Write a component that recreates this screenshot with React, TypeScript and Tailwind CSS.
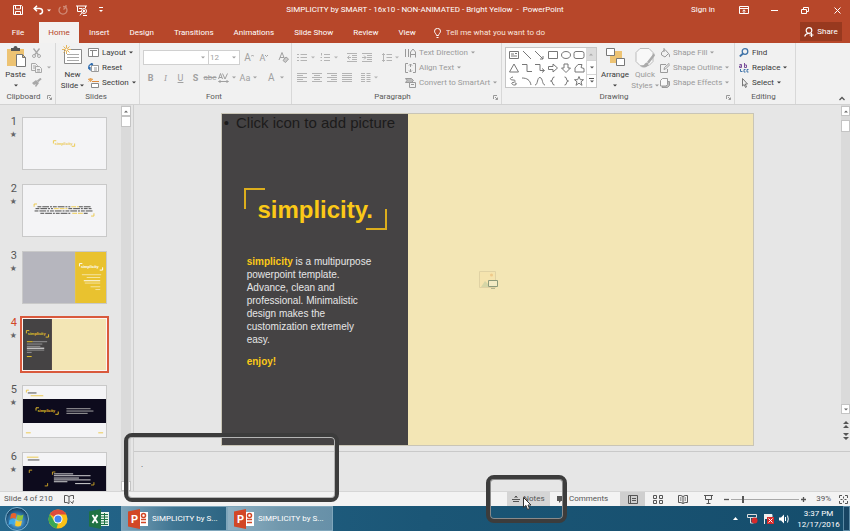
import type { ReactNode } from 'react';

const ui = "font-['Roboto','Open_Sans',sans-serif]";
const arial = "font-['Liberation_Sans',Arial,sans-serif]";

type IconProps = { w: number; h: number; children: ReactNode; className?: string };

function Ico({ w, h, children, className = '' }: IconProps) {
  return (
    <svg
      width={w}
      height={h}
      viewBox={`0 0 ${w} ${h}`}
      fill="none"
      stroke="currentColor"
      strokeWidth="1"
      className={`shrink-0 ${className}`}
      aria-hidden="true"
    >
      {children}
    </svg>
  );
}

function Caret({ className = '' }: { className?: string }) {
  return (
    <svg width="4" height="3" viewBox="0 0 4 3" fill="currentColor" className={`shrink-0 ${className}`} aria-hidden="true">
      <path d="M0 0.5h4L2 2.5z" />
    </svg>
  );
}

function Divider() {
  return <span className="h-[15px] w-px shrink-0 bg-[#d5d5d5]" />;
}

function Tool({ label, children, className = '' }: { label: string; children: ReactNode; className?: string }) {
  return (
    <button type="button" aria-label={label} className={`flex h-[15px] items-center justify-center gap-[3px] ${className}`}>
      {children}
    </button>
  );
}

function RowTool({ icon, text, caret, muted }: { icon: ReactNode; text: string; caret?: boolean; muted?: boolean }) {
  return (
    <button
      type="button"
      className={`flex h-[15px] items-center gap-[3px] whitespace-nowrap ${muted ? 'text-[#9a9a9a]' : 'text-[#3a3a3a]'}`}
    >
      {icon}
      <span>{text}</span>
      {caret && <Caret />}
    </button>
  );
}

function Group({ title, width, launcher, children }: { title: string; width: string; launcher?: boolean; children: ReactNode }) {
  return (
    <section aria-label={title} className={`flex shrink-0 flex-col border-r border-[#d8d8d8] ${width}`}>
      <div className="flex h-[47px] pt-[2px]">{children}</div>
      <div className="flex h-[14px] items-center pr-[3px] text-[#5a5a5a]">
        <span className="flex-1 text-center">{title}</span>
        {launcher && (
          <Ico w={5} h={5} className="text-[#999]">
            <path d="M0.5 4V0.5H4M2 2l2.500 2.500M4.500 2.500v2h-2" />
          </Ico>
        )}
      </div>
    </section>
  );
}

function TitleBar() {
  return (
    <header className="grid h-[22px] grid-cols-[1fr_auto_1fr] items-start text-white">
      <div className="flex h-5 items-center pl-[13px]">
        <button type="button" aria-label="Save">
          <Ico w={10} h={10}>
            <path d="M0.500 0.500h8l1 1v8h-9zM2.500 0.500v3.500h5V0.500M2.500 9.500V6.500h5v3" />
          </Ico>
        </button>
        <button type="button" aria-label="Undo" className="ml-[10px] flex items-center gap-[3px]">
          <Ico w={11} h={10}>
            <path strokeWidth="1.500" d="M4 0.800L1.200 3.500L4 6.200M1.500 3.500H6.500C10.500 3.800 10.500 8.500 6.500 9" />
          </Ico>
          <Caret />
        </button>
        <button type="button" aria-label="Redo" className="ml-[7px] text-[#d08a76]">
          <Ico w={10} h={10}>
            <path strokeWidth="1.300" d="M2.500 2A4 4 0 1 0 7.500 2M5.500 4.500L8 2L8 0M8 2L5 1.500" />
          </Ico>
        </button>
        <button type="button" aria-label="Start From Beginning" className="ml-[8px]">
          <Ico w={12} h={11}>
            <path d="M0 1h11M1.500 1v5.500h4M9.500 1v2M4 10.500l2-3M3 3.500h3" />
            <circle cx="8" cy="6" r="2.500" />
            <path fill="currentColor" d="M7.500 5v2l1.500-1zM7 10.500h4" />
          </Ico>
        </button>
        <button type="button" aria-label="Customize Quick Access Toolbar" className="ml-[11px]">
          <Ico w={4} h={6}>
            <path d="M0 0.500h4" />
            <path stroke="none" fill="currentColor" d="M0 3h4L2 5z" />
          </Ico>
        </button>
      </div>
      <h1 className="h-5 whitespace-pre leading-5">SIMPLICITY by SMART - 16x10 - NON-ANIMATED - Bright Yellow  -  PowerPoint</h1>
      <div className="flex h-5 items-center justify-end pr-[9px]">
        <button type="button">Sign in</button>
        <button type="button" aria-label="Ribbon Display Options" className="ml-6">
          <Ico w={10} h={8}>
            <path d="M0.500 0.500h9v7h-9zM0.500 2.500h9M5 7V4M3.500 5.200L5 3.800l1.500 1.400" />
          </Ico>
        </button>
        <button type="button" aria-label="Minimize" className="ml-[22px]">
          <Ico w={7} h={7}>
            <path d="M0 3.500h7" />
          </Ico>
        </button>
        <button type="button" aria-label="Restore Down" className="ml-[23px]">
          <Ico w={8} h={7}>
            <path d="M0.500 2.500h5v4h-5zM2.500 2V0.500h5v4H6" />
          </Ico>
        </button>
        <button type="button" aria-label="Close" className="ml-[25px]">
          <Ico w={7} h={7}>
            <path d="M0.500 0.500l6 6M6.500 0.500l-6 6" />
          </Ico>
        </button>
      </div>
    </header>
  );
}

const tabs = ['Insert', 'Design', 'Transitions', 'Animations', 'Slide Show', 'Review', 'View'];

function TabBar() {
  return (
    <nav className="flex h-[21px] items-stretch text-white">
      <button type="button" className="w-[39px] pr-[3px]">File</button>
      <button type="button" className="w-10 bg-[#f3f2f1] text-[#b7472a]">Home</button>
      {tabs.map((t) => (
        <button key={t} type="button" className="whitespace-nowrap px-[10px]">
          {t}
        </button>
      ))}
      <label className="ml-2 flex min-w-0 flex-1 items-center gap-[5px]">
        <Ico w={7} h={10}>
          <path d="M2.500 7.500C2.500 6 0.500 5 0.500 3.200a3 2.800 0 0 1 6 0C6.500 5 4.500 6 4.500 7.500zM2.500 9.500h2" />
        </Ico>
        <input
          type="text"
          aria-label="Tell me what you want to do"
          placeholder="Tell me what you want to do"
          className="min-w-0 flex-1 bg-transparent outline-none placeholder:text-[#f7e3dd]"
        />
      </label>
      <button type="button" className="mr-2 flex h-[19px] w-[42px] items-center justify-center gap-[3px] bg-[#98391f]">
        <Ico w={10} h={10}>
          <circle cx="5" cy="3.500" r="2.800" strokeWidth="1.200" />
          <path strokeWidth="1.200" d="M0.800 9.500C1 7.500 2.500 6.500 4.500 6.300M7.500 6v4M5.500 8h4" />
        </Ico>
        Share
      </button>
    </nav>
  );
}

function ClipboardGroup() {
  return (
    <Group title="Clipboard" width="w-[56px]" launcher>
      <button type="button" className="ml-[5px] flex w-[21px] flex-col items-center text-[#3a3a3a]">
        <Ico w={20} h={23}>
          <path stroke="none" fill="#edc373" d="M1 4h17v17H1z" />
          <path stroke="none" fill="#555" d="M5 3h2.500a2 2 0 0 1 4 0H14v3H5z" />
          <path fill="#fff" stroke="#777" d="M10.500 9.500h6l3 3v9h-9zM16.500 9.500v3h3" />
        </Ico>
        <span className="mt-[2px] leading-[10px]">Paste</span>
        <Caret className="mt-[4px]" />
      </button>
      <div className="ml-[5px] flex flex-col items-start text-[#a8a8a8]">
        <Tool label="Cut" className="w-[10px]">
          <Ico w={9} h={10}>
            <path strokeWidth="1.300" d="M1.500 0.500l5 6.500M7.500 0.500l-5 6.500" />
            <circle cx="2" cy="8" r="1.500" />
            <circle cx="7" cy="8" r="1.500" />
          </Ico>
        </Tool>
        <Tool label="Copy">
          <Ico w={11} h={10}>
            <path d="M0.500 0.500h4l2 2v5h-6zM2 3h3M2 5h3" />
            <path fill="#f1f1f1" d="M4.500 3.500h4l2 2v4h-6zM6 6.500h3M6 8h3" />
          </Ico>
          <Caret className="ml-[2px]" />
        </Tool>
        <Tool label="Format Painter" className="w-[12px]">
          <Ico w={10} h={9}>
            <path stroke="none" fill="currentColor" d="M0 5l4-3 3 3-3 4-1-1 1-2-2 1z" />
            <path strokeWidth="2" d="M5.500 3.500L9 0.500" />
          </Ico>
        </Tool>
      </div>
    </Group>
  );
}

function SlidesGroup() {
  return (
    <Group title="Slides" width="w-[84px]">
      <button type="button" className="ml-[4px] flex w-[25px] flex-col items-center text-[#3a3a3a]">
        <Ico w={21} h={20}>
          <path fill="#fff" stroke="#8a8a8a" d="M2.500 4.500h17v14h-17z" />
          <path stroke="#aaa" d="M5 9.500h12M5 12.500h12M5 15.500h12" />
          <path stroke="#e5b55c" d="M4.500 0v9M0 4.500h9M1.500 1.500l6 6M7.500 1.500l-6 6" />
          <circle cx="4.500" cy="4.500" r="1.500" fill="#fff" stroke="#e5b55c" />
        </Ico>
        <span className="mt-[5px] leading-[10px]">New</span>
        <span className="flex items-center gap-[2px] leading-[11px]">
          Slide <Caret />
        </span>
      </button>
      <div className="ml-[3px] flex flex-col items-start">
        <RowTool
          text="Layout"
          caret
          icon={
            <Ico w={11} h={9}>
              <path fill="#fff" stroke="#888" d="M0.500 0.500h10v8h-10zM2 2.500h7M4.500 2.500v6" />
            </Ico>
          }
        />
        <RowTool
          text="Reset"
          icon={
            <Ico w={11} h={10}>
              <path fill="#fff" stroke="#999" d="M3.500 2.500h7v6h-7zM6 5h3M6 7h3" />
              <path stroke="#2f6db0" strokeWidth="1.300" d="M5 1.500H2.500C0.500 2.500 0.500 4 1.500 5.500M0 4.500l2 2V4M3 0l2 1.500" />
            </Ico>
          }
        />
        <RowTool
          text="Section"
          caret
          icon={
            <Ico w={11} h={10}>
              <path stroke="#e5a55c" d="M0 1.500h5M2.500 0v4M0.500 0l4 3.500M4.500 0l-4 3.500" />
              <path stroke="#e08a3a" d="M4 3.500h7" />
              <path fill="#fff" stroke="#888" d="M3.500 5.500h7v4h-7z" />
            </Ico>
          }
        />
      </div>
    </Group>
  );
}

function FontGroup() {
  return (
    <Group title="Font" width="w-[152px]">
      <div className="flex flex-1 flex-col pl-[3px] text-[#a0a0a0]">
        <div className="mt-[5px] flex h-[15px] items-center">
          <label className="flex h-[15px] w-[66px] items-center border border-[#d0d0d0] bg-white pr-[3px]">
            <select aria-label="Font" className="min-w-0 flex-1 appearance-none bg-transparent outline-none">
              <option></option>
            </select>
            <Caret />
          </label>
          <label className="flex h-[15px] w-[31px] items-center border border-l-0 border-[#d0d0d0] bg-white pl-px pr-[3px]">
            <select aria-label="Font Size" className="min-w-0 flex-1 appearance-none bg-transparent outline-none">
              <option>12</option>
            </select>
            <Caret />
          </label>
          <Tool label="Increase Font Size" className="ml-[4px] w-[10px] text-[10px]">
            A<Ico w={3} h={8} className="-ml-[3px]"><path d="M0 2.500l1.500-1.500l1.500 1.500" /></Ico>
          </Tool>
          <Tool label="Decrease Font Size" className="ml-[5px] w-[10px] text-[9px]">
            A<Ico w={3} h={8} className="-ml-[3px]"><path d="M0 1l1.500 1.500L3 1" /></Ico>
          </Tool>
          <span className="ml-[4px]"><Divider /></span>
          <Tool label="Clear All Formatting" className="ml-[5px]">
            <Ico w={11} h={11}>
              <path d="M1 8L4 0.500L7 8M2 5.500h4" />
              <path fill="#ccc" d="M5 8.500l3-3.500l2.500 2l-3 3.500z" />
            </Ico>
          </Tool>
        </div>
        <div className="mt-[5px] flex h-[15px] items-center text-[9px]">
          <Tool label="Bold" className="w-[15px] font-bold">B</Tool>
          <Tool label="Italic" className="w-[15px] font-serif italic">I</Tool>
          <Tool label="Underline" className="w-[15px] underline">U</Tool>
          <Tool label="Text Shadow" className="w-[15px] font-bold">S</Tool>
          <Tool label="Strikethrough" className="w-[14px] text-[8px] line-through">abc</Tool>
          <Tool label="Character Spacing" className="w-[19px] text-[8px]">
            <Ico w={11} h={10}>
              <path d="M0.500 6L2.500 0.500L4.500 6M1 4.500h3M4.500 0.500L7 6L9.500 0.500M1 8.500h9M2.500 7.500l-2 1l2 1M8.500 7.500l2 1l-2 1" />
            </Ico>
            <Caret />
          </Tool>
          <Tool label="Change Case" className="ml-[2px] w-[21px]">
            Aa <Caret />
          </Tool>
          <span className="ml-[3px]"><Divider /></span>
          <Tool label="Font Color" className="ml-[6px] text-[10px]">
            A <Caret className="ml-[2px]" />
          </Tool>
        </div>
      </div>
    </Group>
  );
}

function Lines({ d }: { d: string }) {
  return (
    <Ico w={10} h={9}>
      <path d={d} />
    </Ico>
  );
}

function ParagraphGroup() {
  return (
    <Group title="Paragraph" width="w-[210px]" launcher>
      <div className="flex w-[113px] flex-col pl-[5px] text-[#b4b4b4]">
        <div className="mt-[5px] flex h-[15px] items-center">
          <Tool label="Bullets">
            <Lines d="M0 1.500h2M0 4.500h2M0 7.500h2M3.500 1.500H10M3.500 4.500H10M3.500 7.500H10" />
            <Caret className="ml-px" />
          </Tool>
          <Tool label="Numbering" className="ml-[5px]">
            <Lines d="M1.500 0v2.500M0.500 4.500h1.500M0.500 7.500h1.500M4 1.500H10M4 4.500H10M4 7.500H10" />
            <Caret className="ml-px" />
          </Tool>
          <span className="ml-[4px]"><Divider /></span>
          <Tool label="Decrease List Level" className="ml-[5px]">
            <Lines d="M0 0.500h10M5 2.500h5M5 4.500h5M5 6.500h5M0 8.500h10M4 4.500H0.500M2.500 2.500l-2 2l2 2" />
          </Tool>
          <Tool label="Increase List Level" className="ml-[5px]">
            <Lines d="M0 0.500h10M5 2.500h5M5 4.500h5M5 6.500h5M0 8.500h10M0 4.500h4M2 2.500l2 2l-2 2" />
          </Tool>
          <span className="ml-[5px]"><Divider /></span>
          <Tool label="Line Spacing" className="ml-[5px]">
            <Lines d="M1.500 0.500v8M0 2l1.500-1.500L3 2M0 7l1.500 1.500L3 7M4.500 1.500H10M4.500 4.500H10M4.500 7.500H10" />
            <Caret />
          </Tool>
        </div>
        <div className="mt-[5px] flex h-[15px] items-center">
          <Tool label="Align Left">
            <Lines d="M0 0.500h10M0 2.500h6M0 4.500h10M0 6.500h6M0 8.500h10" />
          </Tool>
          <Tool label="Center" className="ml-[5px]">
            <Lines d="M0 0.500h10M2 2.500h6M0 4.500h10M2 6.500h6M0 8.500h10" />
          </Tool>
          <Tool label="Align Right" className="ml-[5px]">
            <Lines d="M0 0.500h10M4 2.500h6M0 4.500h10M4 6.500h6M0 8.500h10" />
          </Tool>
          <Tool label="Justify" className="ml-[5px]">
            <Lines d="M0 0.500h10M0 2.500h10M0 4.500h10M0 6.500h10M0 8.500h10" />
          </Tool>
          <span className="ml-[4px]"><Divider /></span>
          <Tool label="Columns" className="ml-[5px]">
            <Lines d="M0 0.500h4M0 2.500h4M0 4.500h4M0 6.500h4M0 8.500h4M5.500 0.500h4M5.500 2.500h4M5.500 4.500h4M5.500 6.500h4M5.500 8.500h4" />
            <Caret />
          </Tool>
        </div>
      </div>
      <div className="flex flex-col items-start">
        <RowTool
          muted
          text="Text Direction"
          caret
          icon={<Ico w={11} h={10}><path d="M0.500 1v8M3.500 1v8M5.500 9.500V4L8 1l2.500 3v5.500M5.500 6.500h5" /></Ico>}
        />
        <RowTool
          muted
          text="Align Text"
          caret
          icon={<Ico w={11} h={10}><path d="M3 0.500H0.500v9H3M8 0.500h2.500v9H8M5.500 1v3M4 2.500L5.500 1L7 2.500M5.500 6v3M4 7.500L5.500 9L7 7.500" /></Ico>}
        />
        <RowTool
          muted
          text="Convert to SmartArt"
          caret
          icon={<Ico w={11} h={10}><path fill="#bbb" d="M0.500 0.500h6l2 2l-2 2h-6l1.500-2z" /><path fill="#f1f1f1" d="M4.500 4.500h6v5h-6zM6 6.500h3" /></Ico>}
        />
      </div>
    </Group>
  );
}

const shapes = [
  'M1.500 1.500h9v7h-9zM3 4h3M3 6h6M7 3.500h2',
  'M2 1l8 8',
  'M1 1l8 8M9 6v3H6',
  'M1.500 1.500h9v7h-9z',
  'M6 1.500c6 0 6 7 0 7s-6-7 0-7z',
  'M3 1.500h6q2 0 2 2v3q0 2-2 2H3q-2 0-2-2v-3q0-2 2-2z',
  'M6 1l4.500 8h-9z',
  'M1 1.500h5v7h5',
  'M1 1.500h5v6h4M8 5.500l2.500 2L8 9.500',
  'M1.500 3.500H6v-2.500L10.500 5L6 9V6.500H1.500z',
  'M4 1h4v4h2.500L6 9.500L1.500 5H4z',
  'M2 9V5l3-3.500h4L8 4.500l3 1V9z',
  'M5 1C1 2 2 4 5 4s3 2 0 2.500s0 3 2 2.500s2-2 0-2',
  'M1 2c5 0 8 2 9 7',
  'M1 9C4 9 3 1 6 1.500S8 9 11 9',
  'M7.500 1q-2 0-2 2t-2 2q2 0 2 2t2 2',
  'M4.500 1q2 0 2 2t2 2q-2 0-2 2t-2 2',
  'M6 0.500l1.300 3.200h3.200L8 5.800l1 3.500L6 7.200L3 9.300l1-3.500L1.500 3.700h3.200z',
];

function DrawingGroup() {
  return (
    <Group title="Drawing" width="w-[233px]" launcher>
      <div className="ml-[3px] mt-[2px] flex h-[41px] shrink-0 border border-[#c6c6c6] bg-white">
        <div className="grid grid-cols-6 content-around pl-px text-[#777]">
          {shapes.map((d) => (
            <button key={d} type="button" aria-label="Shape" className="flex h-[13px] w-[13px] items-center justify-center">
              <Ico w={12} h={10}>
                <path d={d} />
              </Ico>
            </button>
          ))}
        </div>
        <div className="ml-px flex w-[10px] flex-col text-[#555]">
          <button type="button" aria-label="Scroll shapes up" className="flex flex-1 items-center justify-center bg-[#dcdcdc]">
            <Caret className="rotate-180 text-[#aaa]" />
          </button>
          <button type="button" aria-label="Scroll shapes down" className="flex flex-1 items-center justify-center border-y border-l border-[#d5d5d5]">
            <Caret />
          </button>
          <button type="button" aria-label="More shapes" className="flex flex-1 flex-col items-center justify-center gap-px border-l border-[#d5d5d5]">
            <span className="h-px w-[5px] bg-[#555]" />
            <Caret />
          </button>
        </div>
      </div>
      <button type="button" className="ml-[3px] flex w-[30px] shrink-0 flex-col items-center text-[#3a3a3a]">
        <Ico w={19} h={20} className="mt-[2px]">
          <path stroke="none" fill="#edc373" d="M4 4h12v12H4z" />
          <path fill="#fff" stroke="#777" d="M0.500 1.500h8v7h-8zM10.500 11.500h8v7h-8z" />
        </Ico>
        <span className="mt-[3px] leading-[10px]">Arrange</span>
        <Caret className="mt-[4px]" />
      </button>
      <button type="button" className="flex w-[30px] shrink-0 flex-col items-center text-[#9a9a9a]">
        <Ico w={20} h={21} className="mt-[2px]">
          <path stroke="#bbb" fill="#f8f8f8" d="M5 1.500h9l4 4v9l-4 4H5l-4-4v-9z" />
          <path stroke="none" fill="#aaa" d="M19 6l-7 9l2 1.500l6-8zM12 15.500c-3 0-2 4-7 4c4 2 9 1 8.500-3z" />
        </Ico>
        <span className="mt-[2px] leading-[10px]">Quick</span>
        <span className="flex items-center gap-[2px] leading-[11px]">
          Styles <Caret />
        </span>
      </button>
      <div className="flex flex-col items-start">
        <RowTool
          muted
          text="Shape Fill"
          caret
          icon={<Ico w={10} h={10}><path d="M1.500 4.500L5 1.500l3.500 4L5 9L1.500 7zM4 0v4M8.500 5.500c2 2 1 3.500 0.500 3.500" /></Ico>}
        />
        <RowTool
          muted
          text="Shape Outline"
          caret
          icon={<Ico w={10} h={10}><path d="M6 1.500H0.500v8h7V6M4 6.500l0.500-2L9 0.500l1 1L5.500 6z" /></Ico>}
        />
        <RowTool
          muted
          text="Shape Effects"
          caret
          icon={<Ico w={10} h={10}><path fill="#bbb" d="M4 3.500h5.500v4l-2 2H2z" /><path fill="#f8f8f8" d="M2.500 0.500h5v6L6 8H0.500V2.500z" /></Ico>}
        />
      </div>
    </Group>
  );
}

function EditingGroup() {
  return (
    <Group title="Editing" width="w-[61px]">
      <div className="ml-[4px] flex flex-col items-start">
        <RowTool
          text="Find"
          icon={
            <Ico w={10} h={9}>
              <circle cx="6" cy="3.500" r="2.800" stroke="#3f73a8" strokeWidth="1.300" />
              <path stroke="#3f73a8" strokeWidth="1.800" d="M4 5.500L0.800 8.500" />
            </Ico>
          }
        />
        <RowTool
          text="Replace"
          caret
          icon={
            <Ico w={10} h={10}>
              <path stroke="#7a4f9a" d="M0.500 1.500h2V4.500h-2v-1.500h2M5.500 0v4.500h2v-2.500h-2" />
              <path stroke="#3f73a8" d="M1.500 6v2.500h2M6.500 6.500h-1.500v2.500h1.500M9.500 6.500H8v2.500h1.500" />
            </Ico>
          }
        />
        <RowTool
          text="Select"
          caret
          icon={<Ico w={10} h={10}><path stroke="#777" d="M3.500 0.500v7.500l1.700-1.500l1.300 3l1-0.500l-1.200-3H8.500z" /></Ico>}
        />
      </div>
    </Group>
  );
}

function Ribbon() {
  return (
    <div className="flex h-[62px] shrink-0 border-b border-[#d2d2d2] bg-[#f1f1f1]">
      <ClipboardGroup />
      <SlidesGroup />
      <FontGroup />
      <ParagraphGroup />
      <DrawingGroup />
      <EditingGroup />
      <div className="flex flex-1 items-end justify-end pb-[3px] pr-[5px] text-[#555]">
        <button type="button" aria-label="Collapse the Ribbon">
          <Ico w={6} h={5}>
            <path strokeWidth="1.300" d="M0.500 4L3 1.500L5.500 4" />
          </Ico>
        </button>
      </div>
    </div>
  );
}

function Brackets({ x, y, w, h, s, color }: { x: number; y: number; w: number; h: number; s: number; color: string }) {
  return <path stroke={color} d={`M${x} ${y + s}V${y}H${x + s}M${x + w} ${y + h - s}V${y + h}H${x + w - s}`} />;
}

function ThumbText({ x, y, size = 4, color }: { x: number; y: number; size?: number; color: string }) {
  return (
    <text x={x} y={y} fontSize={size} fontWeight="bold" fill={color} stroke="none" className={arial}>
      simplicity
    </text>
  );
}

const miniatures: ReactNode[] = [
  <>
    <path stroke="none" fill="#f4f4f6" d="M0 0h86v55H0z" />
    <Brackets x={31.500} y={24.500} w={22} h={6} s={3} color="#ecc94b" />
    <ThumbText x={33} y={29} color="#ecc94b" />
  </>,
  <>
    <path stroke="none" fill="#f4f4f6" d="M0 0h86v55H0z" />
    <Brackets x={11.500} y={20.500} w={62} h={13} s={3} color="#ecc94b" />
    <path stroke="#444" strokeDasharray="4 1 7 1 2 1" d="M15 23.500h34M58 23.500h12M13 25.500h18M47 25.500h24M12 28h61M18 30.500h32M63 30.500h5" />
    <path stroke="#ecc94b" strokeDasharray="5 1" d="M50 23.500h8M32 25.500h14M51 30.500h11" />
  </>,
  <>
    <path stroke="none" fill="#b6b6be" d="M0 0h54v55H0z" />
    <path stroke="none" fill="#e9c22f" d="M54 0h32v55H54z" />
    <Brackets x={58.500} y={12.500} w={24} h={7} s={3} color="#fff" />
    <ThumbText x={60} y={17} color="#fff" />
    <path stroke="#f6e6a4" d="M61 24.500h20M66 27.500h14M64 33.500h16M70 37.500h10M75 40.500h5" />
    <path stroke="#fff" d="M63 31h17" />
  </>,
  <>
    <path stroke="none" fill="#454344" d="M0 0h30v55H0z" />
    <path stroke="none" fill="#f3e6b5" d="M30 0h56v55H30z" />
    <Brackets x={3.500} y={12.500} w={23} h={7} s={3} color="#e9c22f" />
    <ThumbText x={5} y={17.500} color="#ecc524" />
    <path stroke="#999" d="M10 24.500h15M4 27h16M4 29.500h14M4 33.500h18M4 36h5" />
    <path stroke="#fff" d="M4 31.500h18" />
    <path stroke="#ecc524" d="M4 24.500h6M4 40.500h5" />
  </>,
  <>
    <path stroke="none" fill="#f4f4f6" d="M0 0h86v55H0z" />
    <path stroke="none" fill="#0d0b1d" d="M0 14h86v26H0z" />
    <path stroke="#444" d="M5 7.500h9" />
    <path stroke="#ecc94b" d="M3.500 7V4.500H6M8 10.500h13M3 50.500h5M78 50.500h5" />
    <Brackets x={13.500} y={23.500} w={23} h={7} s={3} color="#e9c22f" />
    <ThumbText x={15} y={28.500} color="#ecc524" />
    <path stroke="#aaa" d="M45 24.500h25M45 27h28M45 29.500h22" />
  </>,
  <>
    <path stroke="none" fill="#f4f4f6" d="M0 0h86v55H0z" />
    <path stroke="none" fill="#0d0b1d" d="M0 14h86v41H0z" />
    <path stroke="#444" d="M5 7.500h12" />
    <path stroke="#ecc94b" d="M4 4.500h12" />
    <Brackets x={6.500} y={18.500} w={19} h={17} s={3} color="#c9a227" />
    <Brackets x={30.500} y={20.500} w={43} h={14} s={3} color="#c9a227" />
    <path stroke="#ddd" d="M32 22.500h20M32 24.500h38M32 27h26M32 29h38M32 31h14M54 33h16" />
  </>,
];

function ThumbnailPane() {
  return (
    <aside aria-label="Slides" className="w-[121px] shrink-0 overflow-hidden pt-[10px]">
      <ol className="flex flex-col gap-[10px]">
        {miniatures.map((m, i) => {
          const active = i === 3;
          return (
            <li key={i} className="flex shrink-0">
              <div className={`flex w-5 shrink-0 flex-col items-end gap-[3px] pr-[3px] text-[11px] leading-[13px] ${active ? 'text-[#d24726]' : 'text-[#555]'}`}>
                <span>{i + 1}</span>
                <span className="font-['DejaVu_Sans',sans-serif] text-[8px] leading-[8px] text-[#666]">★</span>
              </div>
              <button
                type="button"
                aria-label={`Slide ${i + 1}`}
                className={`h-[57px] border p-px ${active ? 'border-[#d9593c] bg-[#d9593c]' : 'border-transparent'}`}
              >
                <svg
                  width="83"
                  height="51"
                  viewBox="0 0 86 55"
                  preserveAspectRatio="none"
                  fill="none"
                  className={`box-content border ${active ? 'border-[#fdf5f2]' : 'border-[#c9c9c9]'}`}
                  aria-hidden="true"
                >
                  {m}
                </svg>
              </button>
            </li>
          );
        })}
      </ol>
    </aside>
  );
}

function ScrollButton({ label, down }: { label: string; down?: boolean }) {
  return (
    <button type="button" aria-label={label} className="flex h-[10px] items-center justify-center border border-[#c4c4c4] bg-white text-[#666]">
      <Caret className={down ? '' : 'rotate-180'} />
    </button>
  );
}

function Slide() {
  return (
    <article className={`relative flex aspect-[532/332] h-full border border-[#c9c5b6] bg-[#f3e6b5] ${arial}`}>
      <div className="flex w-[35%] flex-col bg-[#454344]">
        <p className="flex gap-[7px] whitespace-nowrap pl-[2px] text-[15px] leading-[18px] text-[#1c1b1b]">
          <span>•</span>
          <span>Click icon to add picture</span>
        </p>
        <div className="relative ml-[22px] mt-[56px] h-[42px] w-[143px] text-center">
          <span className="absolute left-0 top-0 h-[21px] w-[21px] border-l-2 border-t-2 border-[#dcae1d]" />
          <h2 className="text-[24px] font-bold leading-[44px] text-[#fbc917]">simplicity.</h2>
          <span className="absolute bottom-0 right-0 h-[21px] w-[21px] border-b-2 border-r-2 border-[#dcae1d]" />
        </div>
        <div className="ml-[25px] mt-[25px] w-[130px] text-[10px] leading-[13px] text-[#e6e6e6]">
          <p>
            <strong className="text-[#fbc917]">simplicity</strong> is a multipurpose powerpoint template.
            <br />
            Advance, clean and
            <br />
            professional. Minimalistic design makes the customization extremely easy.
          </p>
          <p className="mt-[9px] font-bold text-[#fbc917]">enjoy!</p>
        </div>
      </div>
      <button type="button" aria-label="Insert picture" className="absolute left-1/2 top-1/2 -translate-x-1/2 -translate-y-1/2">
        <Ico w={20} h={20}>
          <path fill="#f5e4ae" stroke="#e0d2a4" d="M1.500 1.500h16v16h-16z" />
          <circle cx="13.500" cy="5" r="1.500" stroke="none" fill="#efc98a" />
          <path stroke="none" fill="#d5d6a6" d="M3 17l4-6l3 3v3z" />
          <path fill="#f3ebc4" stroke="#8d9a7a" d="M10.500 10.500h9v6h-9z" />
          <path stroke="#b5b58e" d="M13 18.500h4" />
        </Ico>
      </button>
    </article>
  );
}

function NotesPane() {
  return (
    <section aria-label="Notes" className="relative h-10 shrink-0 border-t border-[#c9c9c9]">
      <p className="pl-[7px] pt-[8px] text-[#444]">.</p>
      <div className="pointer-events-none absolute -left-[10px] -top-[19px] z-10 h-[69px] w-[215px] rounded-[8px] border-4 border-[#3c3c3c] shadow-[inset_0_0_0_1px_#b5b5b5]" />
    </section>
  );
}

function Workspace() {
  return (
    <main className="flex min-h-0 flex-1 bg-[#e6e6e6]">
      <ThumbnailPane />
      <div className="flex w-[10px] shrink-0 flex-col bg-[#dadada] pt-px">
        <ScrollButton label="Scroll slides up" />
        <div className="h-[11px] border border-[#c4c4c4] bg-white" />
        <div className="flex-1" />
        <ScrollButton label="Scroll slides down" down />
      </div>
      <div className="ml-[2px] flex min-w-0 flex-1 flex-col border-l border-[#cfcfcf]">
        <div className="flex min-h-0 flex-1">
          <div className="flex min-w-0 flex-1 justify-center pb-[5px] pt-[8px]">
            <Slide />
          </div>
          <div className="flex w-[9px] shrink-0 flex-col bg-[#dadada] pt-px">
            <ScrollButton label="Previous" />
            <div className="mt-[4px] h-[12px] border border-[#c4c4c4] bg-white" />
            <div className="flex-1" />
            <ScrollButton label="Next" down />
            <div className="flex h-[37px] flex-col items-center gap-[5px] bg-[#e6e6e6] pt-[7px] text-[#555]">
              <button type="button" aria-label="Previous Slide">
                <Ico w={6} h={7}>
                  <path fill="currentColor" stroke="none" d="M0 3L3 0l3 3zM0 7l3-3l3 3z" />
                </Ico>
              </button>
              <button type="button" aria-label="Next Slide">
                <Ico w={6} h={7}>
                  <path fill="currentColor" stroke="none" d="M0 0h6L3 3zM0 4h6L3 7z" />
                </Ico>
              </button>
            </div>
          </div>
        </div>
        <NotesPane />
      </div>
    </main>
  );
}

function StatusBar() {
  return (
    <footer className="flex h-[15px] shrink-0 items-center border-t border-[#d6d6d6] bg-[#f3f3f3] text-[#555]">
      <span className="ml-[4px]">Slide 4 of 210</span>
      <button type="button" aria-label="Spelling" className="ml-[11px]">
        <Ico w={10} h={9}>
          <path d="M5 1.500Q3 0 0.500 0.500v7Q3 7 5 8.500V1.500Q7 0 9.500 0.500V4M6.500 6.500l2 2l1-3" />
        </Ico>
      </button>
      <div className="flex-1" />
      <div className="relative h-full">
        <button type="button" className="flex h-full w-[43px] items-center justify-center gap-[3px] bg-[#d5d5d5]">
          <Ico w={8} h={8}>
            <path d="M0 4.500h8M1 6.500h6M4 3V1M2.500 2.500L4 1l1.500 1.500" />
          </Ico>
          Notes
        </button>
        <div className="pointer-events-none absolute -left-[21px] -top-[17px] z-10 h-[48px] w-[81px] rounded-[8px] border-4 border-[#3c3c3c] shadow-[inset_0_0_0_1px_#8a8a8a]" />
        <Ico w={9} h={13} className="pointer-events-none absolute left-[16px] top-[5px] z-20">
          <path fill="#fff" stroke="#333" d="M0.500 0.500v10l2.500-2l1.500 4l2-1l-1.500-3.500h3z" />
        </Ico>
      </div>
      <button type="button" className="ml-[7px] flex items-center gap-[4px]">
        <Ico w={8} h={9}>
          <path fill="currentColor" stroke="none" d="M0 1h7v5H4L2 8V6H0z" />
        </Ico>
        Comments
      </button>
      <button type="button" aria-label="Normal" className="ml-[12px] flex h-full w-[25px] items-center justify-center bg-[#cfcfcf]">
        <Ico w={10} h={9}>
          <path d="M0.500 0.500h9v8h-9zM2.500 0.500v8M4 3.500h4M4 5.500h4" />
        </Ico>
      </button>
      <button type="button" aria-label="Slide Sorter" className="ml-[8px]">
        <Ico w={10} h={9}>
          <path d="M0.500 0.500h3v3h-3zM6.500 0.500h3v3h-3zM0.500 5.500h3v3h-3zM6.500 5.500h3v3h-3z" />
        </Ico>
      </button>
      <button type="button" aria-label="Reading View" className="ml-[15px]">
        <Ico w={10} h={9}>
          <path d="M5 1.500Q3 0 0.500 0.500v7Q3 7 5 8.500Q7 7 9.500 7.500v-7Q7 0 5 1.500v7M2 3h1.500M2 5h1.500M6.500 3H8M6.500 5H8" />
        </Ico>
      </button>
      <button type="button" aria-label="Slide Show" className="ml-[16px]">
        <Ico w={9} h={9}>
          <path d="M0 0.500h9M1.500 0.500v4h6v-4M4.500 5v3M2.500 8.500h4" />
        </Ico>
      </button>
      <button type="button" aria-label="Zoom Out" className="ml-[11px]">
        <Ico w={5} h={5}>
          <path strokeWidth="1.300" d="M0 2.500h5" />
        </Ico>
      </button>
      <input
        type="range"
        aria-label="Zoom"
        min="10"
        max="400"
        defaultValue="76"
        className="mx-[2px] h-[10px] w-[68px] appearance-none bg-[linear-gradient(#a8a8a8,#a8a8a8)] bg-[length:100%_1px] bg-center bg-no-repeat [&::-webkit-slider-thumb]:h-[7px] [&::-webkit-slider-thumb]:w-[2px] [&::-webkit-slider-thumb]:appearance-none [&::-webkit-slider-thumb]:bg-[#555]"
      />
      <button type="button" aria-label="Zoom In">
        <Ico w={5} h={5}>
          <path strokeWidth="1.300" d="M0 2.500h5M2.500 0v5" />
        </Ico>
      </button>
      <span className="ml-[10px]">39%</span>
      <button type="button" aria-label="Fit slide to current window" className="ml-[8px] mr-[2px]">
        <Ico w={9} h={9}>
          <path d="M3 0.500H0.500V3M6 0.500h2.500V3M0.500 6v2.500H3M8.500 6v2.500H6M4.500 1.500v2M4.500 5.500v2M1.500 4.500h2M5.500 4.500h2" />
        </Ico>
      </button>
    </footer>
  );
}

function TaskButton({ active }: { active?: boolean }) {
  return (
    <button
      type="button"
      className={`flex h-full w-[106px] items-center gap-[4px] border border-[#7fa6bb] pl-[6px] text-white ${
        active ? 'bg-linear-to-r from-[#8fb0c2] via-[#7198ad] to-[#6790a8]' : 'bg-linear-to-r from-[#7aa2b8] via-[#3f7592] to-[#2d6583]'
      }`}
    >
      <Ico w={20} h={20}>
        <path stroke="none" fill="#fff" d="M11 3h9v14h-9z" />
        <path stroke="#d24726" strokeWidth="1.500" d="M13 10.500h5M13 13.500h5" />
        <circle cx="15.500" cy="6.500" r="2" stroke="#d24726" strokeWidth="1.500" />
        <path stroke="none" fill="#d24726" d="M0 2.500L12 0v20L0 17.500z" />
        <text x="3" y="14" fontSize="11" fontWeight="bold" fill="#fff" stroke="none">P</text>
      </Ico>
      <span className="whitespace-nowrap">SIMPLICITY by S...</span>
    </button>
  );
}

function Taskbar() {
  return (
    <div className="flex h-[25px] shrink-0 items-center bg-linear-to-r from-[#25678c] via-[#1b5676] to-[#154d6c] text-white">
      <button type="button" aria-label="Start" className="ml-[4px]">
        <svg width="26" height="24" viewBox="0 0 26 24" aria-hidden="true">
          <defs>
            <radialGradient id="orb" cx="0.500" cy="0.600" r="0.550">
              <stop offset="0" stopColor="#8fd0f0" />
              <stop offset="0.600" stopColor="#2f77ad" />
              <stop offset="1" stopColor="#16405f" />
            </radialGradient>
          </defs>
          <circle cx="13" cy="12" r="11.500" fill="url(#orb)" stroke="#7fb4d2" />
          <path fill="#e8622c" d="M7 7q3-2 5.500 0l-1 5Q9 10 6 12z" />
          <path fill="#8cc63f" d="M13.500 7.500q3 2 6 0l-1 5q-3 2-6 0z" />
          <path fill="#3fa9e8" d="M5.500 13q3-2 5.500 0l-1 5q-2.500-2-5.500 0z" />
          <path fill="#fbc92b" d="M12 13.500q3 2 6 0l-1 5q-3 2-6 0z" />
        </svg>
      </button>
      <button type="button" aria-label="Google Chrome" className="ml-[18px]">
        <svg width="20" height="20" viewBox="0 0 20 20" aria-hidden="true">
          <circle cx="10" cy="10" r="9.500" fill="#fbc116" />
          <path fill="#de4b3c" d="M10 10L1.800 5.200A9.500 9.500 0 0 1 18.500 5.600H10z" />
          <path fill="#3aa757" d="M1.800 5.200L6.200 12.200L10 14.400L8.500 19.400A9.500 9.500 0 0 1 1.800 5.200z" />
          <circle cx="10" cy="10" r="4.500" fill="#fff" />
          <circle cx="10" cy="10" r="3.500" fill="#4285f4" />
        </svg>
      </button>
      <button type="button" aria-label="Excel" className="ml-[21px]">
        <svg width="20" height="20" viewBox="0 0 20 20" aria-hidden="true">
          <path fill="#e8f3ec" d="M11 3h9v14h-9z" />
          <path stroke="#1f7244" fill="none" d="M12 5.500h7M12 8h7M12 10.500h7M12 13h7M12 15.500h7M15.500 4v12" />
          <path fill="#1f7244" d="M0 2.500L12 0v20L0 17.500z" />
          <path stroke="#fff" strokeWidth="1.800" d="M3.500 6l5 8M8.500 6l-5 8" />
        </svg>
      </button>
      <div className="ml-[12px] flex h-full">
        <TaskButton />
        <TaskButton active />
      </div>
      <div className="flex-1" />
      <button type="button" aria-label="Show hidden icons">
        <Ico w={5} h={3}>
          <path stroke="none" fill="currentColor" d="M0 3L2.500 0L5 3z" />
        </Ico>
      </button>
      <Ico w={11} h={11} className="ml-[9px]">
        <path stroke="#ddd" d="M0.500 1.500h9v3h-9zM3.500 5v5h3" />
        <circle cx="7.500" cy="7.500" r="3" stroke="none" fill="#d62b2b" />
      </Ico>
      <Ico w={11} h={11} className="ml-[5px]">
        <path stroke="#eee" fill="#eee" d="M1.500 11V1M2 1.500h7v4H2z" />
        <path stroke="none" fill="#d62b2b" d="M4 4h7v7H4z" />
        <path stroke="#fff" d="M5.500 5.500l4 4M9.500 5.500l-4 4" />
      </Ico>
      <Ico w={10} h={10} className="ml-[5px]">
        <path stroke="none" fill="currentColor" d="M0 3.500h2L5 0.500v9l-3-3H0z" />
        <path d="M6.500 3v4M8.500 1.500q1.500 3.500 0 7" />
      </Ico>
      <div className="ml-[8px] w-[43px] text-center leading-[11px]">
        <div>3:37 PM</div>
        <div>12/17/2016</div>
      </div>
      <button type="button" aria-label="Show desktop" className="ml-[3px] h-full w-[7px] border border-[#5b8aa5] bg-[#174563]" />
    </div>
  );
}

export default function App() {
  return (
    <div className={`flex h-screen flex-col overflow-hidden text-[8px] leading-[10px] ${ui}`}>
      <div className="shrink-0 bg-[#b7472a]">
        <TitleBar />
        <TabBar />
      </div>
      <Ribbon />
      <Workspace />
      <StatusBar />
      <Taskbar />
    </div>
  );
}
